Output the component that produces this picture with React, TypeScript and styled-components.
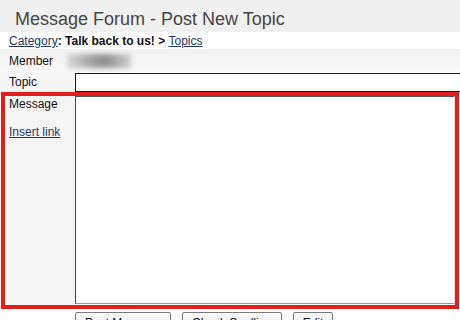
import styled, { createGlobalStyle } from "styled-components";

const GlobalStyle = createGlobalStyle`
    html, body {
        margin: 0;
        padding: 0;
        background: #ffffff;
        overflow: hidden;
    }
    body {
        font-family: "Liberation Sans", Arial, sans-serif;
        font-size: 12px;
        color: #111;
    }
`;

const Page = styled.div`
    width: 460px;
    height: 320px;
    overflow: hidden;
`;

const TitleBar = styled.h1`
    margin: 0;
    height: 32px;
    box-sizing: border-box;
    padding: 10px 0 4px 15px;
    background: #f0f0f0;
    font-size: 18px;
    line-height: 18px;
    font-weight: normal;
    color: #454545;
`;

const Crumbs = styled.div`
    height: 17px;
    box-sizing: border-box;
    padding: 1px 0 0 9px;
    line-height: 16px;
    font-weight: bold;
    color: #111;
`;

const Link = styled.a`
    color: #1c3766;
    text-decoration: underline;
    font-weight: normal;
    cursor: pointer;
`;

const Row = styled.div<{ $shade?: boolean; $height: number }>`
    display: grid;
    grid-template-columns: 75px 1fr;
    height: ${(p) => p.$height}px;
    background: ${(p) =>
        p.$shade ? "linear-gradient(#f2f2f2, #f7f7f7)" : "#ffffff"};
`;

const Label = styled.div<{ $plain?: boolean }>`
    display: flex;
    align-items: center;
    padding-left: 9px;
    background: ${(p) => (p.$plain ? "transparent" : "#f5f5f5")};
    line-height: 16px;
`;

const Value = styled.div`
    display: flex;
    align-items: center;
`;

const BlurredName = styled.div`
    margin-left: -8px;
    width: 64px;
    height: 14px;
    background: linear-gradient(90deg, #d8d8d8, #9a9a9a 45%, #8f8f8f 60%, #cfcfcf);
    filter: blur(2.5px);
`;

const TopicInput = styled.input`
    box-sizing: border-box;
    width: 100%;
    height: 19px;
    margin-top: 1px;
    border: 1px solid #1a1a1a;
    border-right: none;
    background: #fff;
    outline: none;
`;

const Highlight = styled.div`
    display: flex;
    margin: 0 1px;
    height: 217px;
    box-sizing: border-box;
    border: 4px solid #e41d1d;
`;

const SideColumn = styled.div`
    width: 70px;
    box-sizing: border-box;
    padding: 0 0 0 4px;
    background: #f5f5f5;
    display: flex;
    flex-direction: column;
    gap: 12px;
    line-height: 16px;
`;

const MessageArea = styled.textarea`
    flex: 1;
    box-sizing: border-box;
    height: 208px;
    margin: 0;
    resize: none;
    border-style: solid;
    border-width: 1px;
    border-color: #5a5a5a #e0e0e0 #9a9a9a #4a4a4a;
    background: #fff;
    outline: none;
`;

const ButtonRow = styled.div`
    display: flex;
    gap: 11px;
    padding: 3px 0 0 75px;
`;

const Button = styled.button<{ $width: number }>`
    width: ${(p) => p.$width}px;
    height: 21px;
    padding: 0;
    border: 1px solid #7a7a7a;
    border-radius: 2px;
    background: linear-gradient(#fafafa, #e2e2e2);
    font-family: "Liberation Sans", Arial, sans-serif;
    font-size: 12px;
    color: #111;
`;

export default function App() {
    return (
        <Page>
            <GlobalStyle />
            <TitleBar>Message Forum - Post New Topic</TitleBar>
            <Crumbs>
                <Link>Category</Link>: Talk back to us! &gt; <Link>Topics</Link>
            </Crumbs>
            <Row $shade $height={23}>
                <Label $plain>Member</Label>
                <Value>
                    <BlurredName />
                </Value>
            </Row>
            <Row $height={20}>
                <Label>Topic</Label>
                <Value>
                    <TopicInput />
                </Value>
            </Row>
            <Highlight>
                <SideColumn>
                    <span>Message</span>
                    <Link>Insert link</Link>
                </SideColumn>
                <MessageArea />
            </Highlight>
            <ButtonRow>
                <Button $width={96}>Post Message</Button>
                <Button $width={100}>Check Spelling</Button>
                <Button $width={40}>Edit</Button>
            </ButtonRow>
        </Page>
    );
}
